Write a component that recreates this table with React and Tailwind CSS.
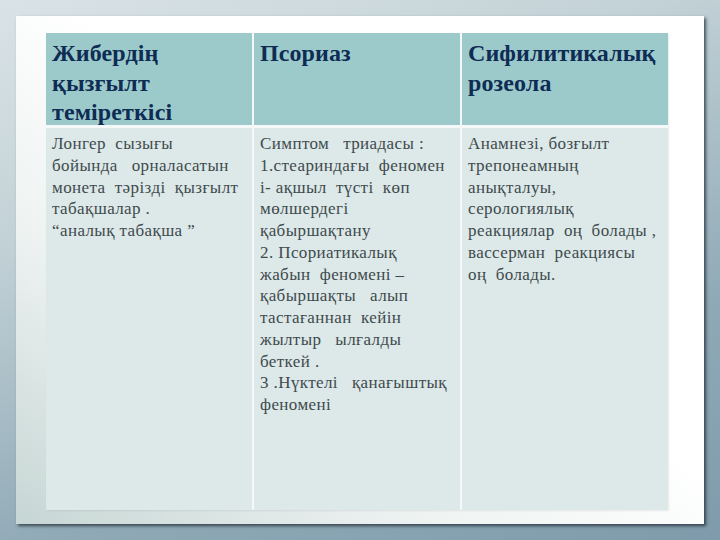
// Comparison slide: three skin conditions side by side
const HEADERS = [
  ['Жибердің', 'қызғылт', 'теміреткісі'],
  ['Псориаз'],
  ['Сифилитикалық', 'розеола'],
]

// Lines are kept as set on the slide; runs of spaces keep its wide word gaps
const BODY = [
  [
    'Лонгер  сызығы',
    'бойында   орналасатын',
    'монета  тәрізді  қызғылт',
    'табақшалар .',
    '“аналық табақша ”',
  ],
  [
    'Симптом   триадасы :',
    '1.стеариндағы  феномен',
    'і- ақшыл  түсті  көп',
    'мөлшердегі',
    'қабыршақтану',
    '2. Псориатикалық',
    'жабын  феномені –',
    'қабыршақты   алып',
    'тастағаннан  кейін',
    'жылтыр   ылғалды',
    'беткей .',
    '3 .Нүктелі   қанағыштық',
    'феномені',
  ],
  [
    'Анамнезі, бозғылт',
    'трепонеамның',
    'анықталуы,',
    'серологиялық',
    'реакциялар  оң  болады ,',
    'вассерман  реакциясы',
    'оң  болады.',
  ],
]

function HeaderCell({ lines }) {
  return (
    <div className="bg-[#9ccaca] px-[6px] pt-[6px] text-[24px] leading-[29.5px] font-bold text-[#0e2c54] tracking-[0.1px]">
      {lines.map((l) => (
        <div key={l}>{l}</div>
      ))}
    </div>
  )
}

function BodyCell({ lines }) {
  return (
    <div className="bg-[#dde8e9] px-[6px] pt-[5px] text-[17px] leading-[21.75px] text-[#3d4b4d] tracking-[0.4px]">
      {lines.map((text) => (
        <div key={text} className="whitespace-pre">
          {text}
        </div>
      ))}
    </div>
  )
}

export default function App() {
  return (
    <div className="w-[720px] h-[540px] overflow-hidden flex p-4 bg-[linear-gradient(160deg,#dae3e6_0%,#c3d2d7_30%,#8fa9b6_70%,#7f9bab_100%)] [font-family:'Liberation_Serif','Times_New_Roman',serif]">
      {/* Slide panel */}
      <div className="flex-1 flex pl-[30px] pr-[36px] pt-[17px] pb-[14px] bg-[linear-gradient(to_top_right,#c6d6d4_0%,#eef3f2_30%,#ffffff_55%)] shadow-[2px_2px_3px_rgba(20,30,40,0.7)]">
        {/* Table */}
        <div className="flex-1 grid grid-cols-3 grid-rows-[92px_1fr] gap-x-[2px] gap-y-[3px] bg-[#f4f8f8] shadow-[1px_1px_2px_rgba(0,0,0,0.08)]">
          {HEADERS.map((h, i) => (
            <HeaderCell key={i} lines={h} />
          ))}
          {BODY.map((lines, i) => (
            <BodyCell key={i} lines={lines} />
          ))}
        </div>
      </div>
    </div>
  )
}
